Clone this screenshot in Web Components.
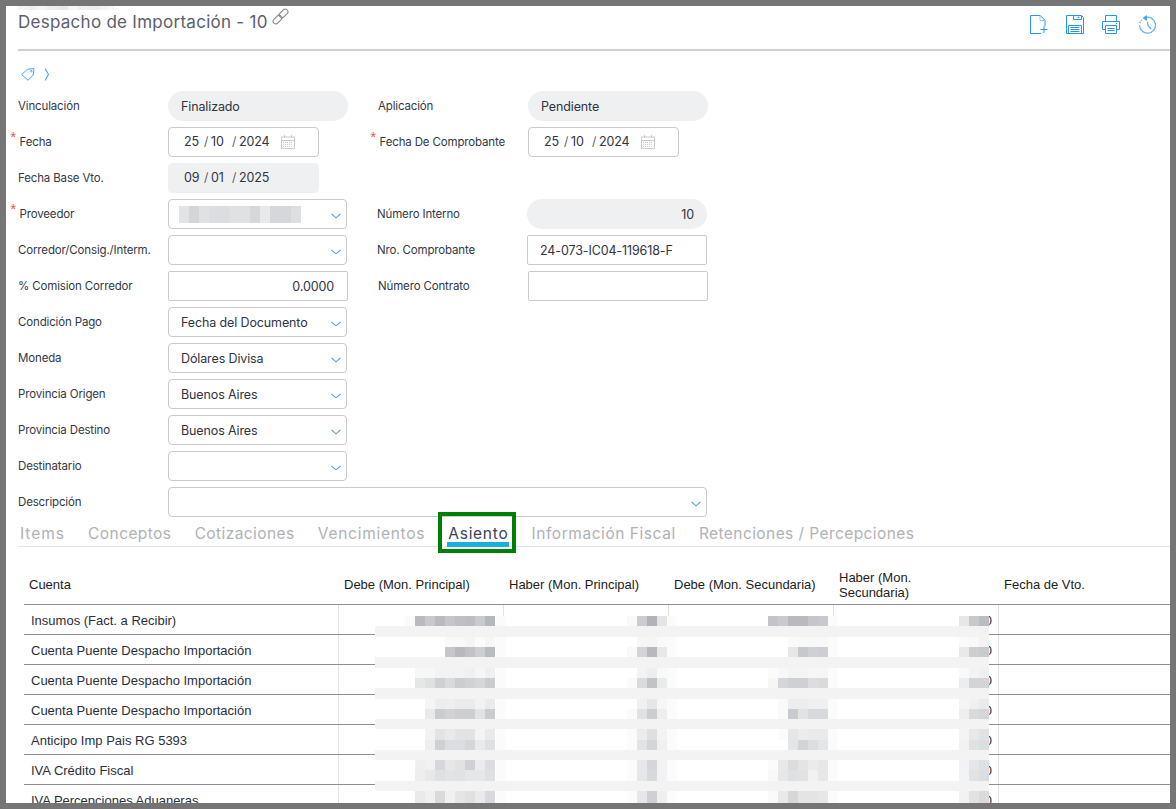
<!DOCTYPE html>
<html lang="es"><head><meta charset="utf-8"><title>Despacho de Importación</title>
<style>
html,body{margin:0;padding:0}
body{background:#757575;font-family:Inter,"Liberation Sans",sans-serif;overflow:hidden}
</style></head>
<body>
<app-page>
  <blur-strip cells="10:f4f4f4,10:f0f0f0,10:f6f6f6,11:eeeeee,10:eaeaea,10:f6f6f6,11:f0f0f0,10:eeeeee,10:f4f4f4,5:f8f8f8"></blur-strip>
  <page-header></page-header>
  <tag-row></tag-row>
  <form-row><form-field label="Vinculación" kind="pill" value="Finalizado"></form-field><form-field label="Aplicación" kind="pill" value="Pendiente"></form-field></form-row>
  <form-row><form-field label="Fecha" req kind="date" value="25/10/2024"></form-field><form-field label="Fecha De Comprobante" req kind="date" value="25/10/2024"></form-field></form-row>
  <form-row><form-field label="Fecha Base Vto." kind="dateoff" value="09/01/2025"></form-field></form-row>
  <form-row><form-field label="Proveedor" req kind="select" blur></form-field><form-field shift label="Número Interno" kind="pillnum" value="10"></form-field></form-row>
  <form-row><form-field label="Corredor/Consig./Interm." kind="select"></form-field><form-field shift label="Nro. Comprobante" kind="input" value="24-073-IC04-119618-F"></form-field></form-row>
  <form-row><form-field label="% Comision Corredor" kind="num" value="0.0000"></form-field><form-field label="Número Contrato" kind="input"></form-field></form-row>
  <form-row><form-field label="Condición Pago" kind="select" value="Fecha del Documento"></form-field></form-row>
  <form-row><form-field label="Moneda" kind="select" value="Dólares Divisa"></form-field></form-row>
  <form-row><form-field label="Provincia Origen" kind="select" value="Buenos Aires"></form-field></form-row>
  <form-row><form-field label="Provincia Destino" kind="select" value="Buenos Aires"></form-field></form-row>
  <form-row><form-field label="Destinatario" kind="select"></form-field></form-row>
  <form-row><form-field label="Descripción" kind="select" wide></form-field></form-row>
  <tab-bar></tab-bar>
  <data-table></data-table>
  <pixel-mask></pixel-mask>
</app-page>
<script>
const CHEV='<svg width="10" height="6" viewBox="0 0 10 6" fill="none"><path d="M.5 .8 5 4.8 9.5 .8" stroke="#5b9bdc" stroke-width="1.1"/></svg>';
const CAL='<svg width="14" height="14" viewBox="0 0 14 14" fill="none" stroke="#c9cbce"><rect x=".5" y="2" width="13" height="11.5"/><path d="M3.5 0v3M10.5 0v3"/><path d="M1 5.5h12"/><path d="M2 7.5h10M2 9.5h10M2 11.5h10" stroke-dasharray="1 1"/></svg>';
function def(name,render){customElements.define(name,class extends HTMLElement{connectedCallback(){if(this.shadowRoot)return;this.attachShadow({mode:'open'}).innerHTML=render(this)}})}

def('app-page',()=>`<style>:host{display:block;margin:6px 6px 0;width:1164px;height:797px;background:#fff;position:relative;overflow:hidden;box-sizing:border-box;padding-left:12px}</style><slot></slot>`);

def('blur-strip',el=>{
 const cells=el.getAttribute('cells').split(',').map(c=>{const [w,col]=c.split(':');return `<i style="width:${w}px;background:#${col}"></i>`}).join('');
 return `<style>:host{display:flex;height:4px;margin-left:-1px}i{display:block;height:100%}</style>${cells}`});

def('page-header',()=>`<style>
:host{display:flex;justify-content:space-between;height:39px;border-bottom:2px solid #d0d0d4}
.t{display:flex;align-items:flex-start;height:24px;font:400 17px/24px Inter,sans-serif;letter-spacing:.27px;color:#5b606b}
.t svg{margin:-2px 0 0 4px}
.a{display:flex;gap:18px;padding:5px 12px 0 0;align-items:flex-start}
svg{display:block}
</style>
<div class="t"><span>Despacho de Importación - 10</span>
<svg width="17" height="17" viewBox="0 0 17 17" fill="none" stroke="#7d828b" stroke-width="1"><rect x="-5" y="-2.7" width="10" height="5.4" rx="2.7" transform="translate(5.4 11.6) rotate(-45)"/><rect x="-5" y="-2.7" width="10" height="5.4" rx="2.7" transform="translate(11.6 5.4) rotate(-45)"/></svg></div>
<div class="a">
<svg width="18" height="19" viewBox="0 0 18 19" fill="none" stroke="#2196f3"><path d="M11 18.5H.5V.5H10L15 5.2V11"/><path d="M10 .5V5.5H15" stroke="#90caf9"/><path d="M10.5 14.5h7M14 11v7"/></svg>
<svg width="18" height="19" viewBox="0 0 18 19" fill="none" stroke="#2196f3"><path d="M.5.5H15.5L17.5 2.5V18.5H.5Z"/><path d="M7.5.5V4.5H15.5V.5"/><path d="M12.5 1.5v1.5" stroke-width="1.5"/><path d="M2.5 18.5V10.5H15.5V18.5"/><path d="M4.5 12.5h9M4.5 14.5h9M4.5 16.5h9"/></svg>
<svg width="18" height="19" viewBox="0 0 18 19" fill="none" stroke="#2196f3"><path d="M3.5 6V.5H14.5V6"/><path d="M3.5 14.5H.5V6.5H17.5V14.5H14.5"/><path d="M3.5 10.5H14.5V18.5H3.5Z"/><path d="M5.5 13.5h7M5.5 15.5h7"/><path d="M14.5 8v1"/></svg>
<svg width="20" height="19" viewBox="0 0 20 19" fill="none" stroke="#64b5f6" stroke-width="1.3"><path d="M7.5 2.4A8 8 0 1 1 1.5 10.5"/><path d="M1.8 8A8 8 0 0 1 4 4.8" stroke-dasharray="1.5 1.2"/><path d="M9 0v6L4.5 3Z" fill="#42a5f5" stroke="none"/><path d="M9.5 6.5 10 10.5 13 14"/></svg>
</div>`);

def('tag-row',()=>`<style>:host{display:flex;align-items:center;gap:9px;height:34px;padding:12px 0 0 3px;box-sizing:border-box}svg{display:block}</style>
<svg width="14" height="14" viewBox="0 0 14 14" fill="none" stroke="#42a5f5"><path d="M.7 7.6 6.5 2.2 13 1.6 12.2 8 7 13.3Z"/><circle cx="10.3" cy="4.2" r=".7"/></svg>
<svg width="6" height="13" viewBox="0 0 6 13" fill="none" stroke="#42a5f5" stroke-width="1.1"><path d="M1 .5 4.5 6.5 1 12.5"/></svg>`);

def('form-row',()=>`<style>:host{display:flex;height:30px;margin-top:6px;align-items:flex-start}</style><slot></slot>`);

def('form-field',el=>{
 const k=el.getAttribute('kind'),v=el.getAttribute('value')||'',req=el.hasAttribute('req'),wide=el.hasAttribute('wide'),shift=el.hasAttribute('shift');
 let inner='';
 if(k==='date'||k==='dateoff'){const p=v.split('/');inner=`<span class="d1">${p[0]}</span><span class="s">/</span><span class="d2">${p[1]}</span><span class="s">/</span><span class="d3">${p[2]}</span>`+(k==='date'?`<span class="cal">${CAL}</span>`:'')}
 else if(k==='select'){inner=(el.hasAttribute('blur')?`<blur-bar></blur-bar>`:`<span class="v">${v}</span>`)+`<span class="ch">${CHEV}</span>`}
 else inner=`<span class="v">${v}</span>`;
 return `<style>
:host{display:flex;width:${wide?'auto':'360px'};height:30px;${shift?'margin-left:-1px;':''}}
.l{position:relative;width:150px;flex:none;box-sizing:border-box;font:400 11.5px/30px Inter,sans-serif;letter-spacing:-.15px;color:#333844;padding-left:${req?'1.5px':'0'};white-space:nowrap}
.l b{position:absolute;left:-7.5px;top:-4px;color:#ef4a52;font:400 14px/28px "Liberation Sans",sans-serif}
.c{box-sizing:border-box;height:30px;display:flex;align-items:center;font:400 12.5px/20px Inter,sans-serif;letter-spacing:-.12px;color:#30343f;flex:none}
.v{padding-top:2px}
.pill,.pillnum{width:180px;border-radius:15px;background:#eff0f2;padding:0 13px}
.pillnum{justify-content:flex-end}
.date,.dateoff{width:151px;border-radius:4px;border:1px solid #c9cacd;padding-left:15px}
.dateoff{background:#eff0f2;border-color:#eff0f2}
.d1{width:20px}.d2{width:21px}.s{width:7px;font-weight:300}
.cal{margin-left:11px;display:flex;align-items:center}
.select{width:${wide?'539px':'179px'};border:1px solid #c9cacd;border-radius:4px;padding:0 5px 0 12px;justify-content:space-between}
.input{width:180px;border:1px solid #c9cacd;border-radius:2px;padding:0 12px}
.num{width:180px;border:1px solid #c9cacd;border-radius:2px;padding:0 13px;justify-content:flex-end}
.ch{display:flex;margin-left:auto;padding-top:3px}
blur-bar{margin-left:-2px}
</style><div class="l">${req?'<b>*</b>':''}${el.getAttribute('label')}</div><div class="c ${k}">${inner}</div>`});

def('blur-bar',()=>{
 const c=['e2e3e4','d4d5d7','e0e1e3','dcdde0','dcdde0','e0e1e3','e0e1e3','d6d7da','e8e9ea','d6d7da','d6d7da','dedfe1'];
 return `<style>:host{display:flex;height:17px}i{display:block;width:10.17px;height:100%}</style>`+c.map(x=>`<i style="background:#${x}"></i>`).join('')});

def('tab-bar',()=>{
 const tabs=[['Items',.96],['Conceptos',.42],['Cotizaciones',.42],['Vencimientos',.72],['Asiento',.72],['Información Fiscal',.55],['Retenciones / Percepciones',.42]];
 return `<style>
:host{display:flex;height:30px;box-sizing:border-box;border-bottom:1px solid #e3e3e5;padding:5px 0 0 2px;gap:23.2px}
.t{position:relative;font:400 15.5px/24px Inter,sans-serif;color:#b0b2b6;white-space:nowrap;height:24px}
.on{color:#3a4256}
.on::before{content:"";position:absolute;left:-1px;right:-1px;top:20px;height:5px;background:#1bb0d6}
.on::after{content:"";position:absolute;left:-10px;right:-8px;top:-10px;height:41px;box-sizing:border-box;border:4px solid #008000}
</style>`+tabs.map(([t,s])=>`<div class="t${t==='Asiento'?' on':''}" style="letter-spacing:${s}px">${t}</div>`).join('')});

def('data-table',()=>{
 const rows=['Insumos (Fact. a Recibir)','Cuenta Puente Despacho Importación','Cuenta Puente Despacho Importación','Cuenta Puente Despacho Importación','Anticipo Imp Pais RG 5393','IVA Crédito Fiscal','IVA Percepciones Aduaneras'];
 const heads=['Cuenta','Debe (Mon. Principal)','Haber (Mon. Principal)','Debe (Mon. Secundaria)','Haber (Mon.<br>Secundaria)','Fecha de Vto.'];
 return `<style>
:host{display:block;margin:18px 0 0 6px;font:400 13px/15px "Liberation Sans",Arial,sans-serif;color:#2b2f3a}
.r{display:grid;grid-template-columns:314px 165px 165px 165px 165px 172px;box-sizing:border-box;height:30px;border-bottom:1px solid #8e8e8e}
.h{height:40px;color:#1c1c1c}
.h div{display:flex;align-items:center;padding:0 8px 0 6px;box-sizing:border-box}
.h div:first-child{padding-left:5px}
.b div{display:flex;align-items:center;box-sizing:border-box;border-left:1px solid #e2e2e2;padding-top:1px}
.b div:first-child{padding-left:7px;border-left:0}
.b .n{justify-content:flex-end;padding-right:6px}
</style><div class="r h">${heads.map(h=>`<div><span>${h}</span></div>`).join('')}</div>
${rows.map(r=>`<div class="r b"><div>${r}</div><div></div><div></div><div></div><div class="n">0</div><div></div></div>`).join('')}`});

def('pixel-mask',()=>{
 const Y=[[0,10],[21,10],[31,10],[52,10],[62,10],[83,10],[93,10],[113,11],[124,10],[144,10],[154,11],[175,12]];
 const bands=[10,41,72,103,134,165];
 const G=[
 {x:405,r:['f9fafa b8babf c8c9cd b8babe c5c6ca bfc0c5 bcbec2 c9cacd b5b8bb',
   '- - - - f9f9f9 f9f9f9 f5f5f5 fbfbfb f6f6f6','- - - - c6c7cb b7b9be c1c2c6 cdced1 b9bcbf',
   '- f6f7f7 f6f7f7 f2f3f4 f2f3f4 f2f3f4 eff0f1 f6f6f6 eff0f1','- e5e6e7 dfe0e2 cfd0d4 d9dadc cccdd1 d1d2d5 d6d7d9 cbccd0',
   '- - f5f5f5 ecedee eeeeee ebebed ebebed f1f2f3 e9eaeb','- - e9e9ea cbccd0 d1d2d4 cdced2 cdced2 e2e3e4 cbccd0',
   '- - f2f2f2 e2e3e5 e8e9ea e2e3e5 e2e3e5 f4f4f4 e9eaeb','- - eeeeef d0d1d3 dcdde0 dcdde0 d5d6d8 e9eaeb dfe0e2',
   '- efefef f1f1f0 d6d7da e6e7e8 e1e2e4 d0d1d4 ebecee dcdde0','- eeeeef e7e8e9 dfe0e2 e2e3e5 e1e2e3 e5e6e7 e6e7e8 dfe0e2',
   '- e9eaec eff0f2 d9dadc eff0f2 e4e5e6 dfe0e2 e9eaeb d8d9dc']},
 {x:627,r:['f9f9f9 cbccd0 b2b3b8 e3e4e6',
   '- f6f6f6 f5f5f5 fafafa','f9f9f9 d3d4d6 b7b9bd e7e8e9',
   '- f3f3f3 edeeef f8f9f9','fafafa dadbdc c2c3c7 e9eaeb',
   '- f0f0f1 e5e6e8 f6f6f6','fafafa e0e1e3 cccdd1 eeeeef',
   'fbfbfb ebecec dedfe1 f2f3f5','fbfbfb e2e3e5 d4d5d7 f0f0f0',
   'fbfbfb e6e7e9 d5d6da f1f2f4','fbfbfb e6e7e9 d8d9dc f1f2f4',
   'fbfbfb e6e7e9 cfd0d4 efefef']},
 {x:768,r:['c3c4c9 c9cacd b8babe b8babe c5c6ca c8c9cc',
   '- - fafafa f8f9f9 f8f8f8 f8f8f8','- - e6e7e8 c7c8cc cfd0d3 cdced1',
   'fbfbfb f6f7f7 f3f4f4 f4f4f4 f5f6f5 f5f6f5','f6f6f6 d5d6da cfd0d4 cfd0d4 dcdde0 d9dadc',
   '- fafafa ecedee ecedee f0f0f1 eff0f1','- fafafa c9cacf e2e3e4 d8d9dc d8d9dc',
   '- fbfbfb e5e6e7 ebecec e9eaeb e9eaeb','- - e4e5e6 d3d4d6 dcdde0 e4e5e6',
   'fbfbfb e7e8e9 dbdcde e3e4e6 eaebec e6e7e9','f8f8f8 e6e7e9 dfe0e2 e1e2e4 f1f1f1 e6e7e9',
   'fafafa e8e9ea d6d7d9 e3e4e5 e3e4e5 e5e6e7']},
 {x:959,r:['e6e7e9 c7c8cc bbbcc1',
   'fafafa f9f9f9 f3f3f3','e8e9eb cdced1 c9cacd',
   'f8f9f9 f2f3f4 eff0f1','ecedee d3d4d5 d3d4d5',
   'f5f5f5 f0f0f2 e9eaeb','eeeeef d9dadc d5d6d8',
   'f4f4f4 e7e8ea e1e2e4','f1f2f1 e0e1e3 dcdde0',
   'f1f2f5 e5e6e8 dfe0e4','f2f3f5 e1e2e4 dcdde0',
   'f1f2f1 e1e2e4 d9dadc']}];
 let s=`<rect x="0" y="0" width="614" height="187" fill="#fff"/>`;
 [[496,10],[667,10],[828,10]].forEach(([x,w])=>{s+=`<rect x="${x-375}" y="0" width="${w}" height="187" fill="#fbfbfb"/>`});
 G.forEach(g=>{g.r.forEach((row,i)=>{const [y,h]=Y[i];row.split(' ').forEach((c,j)=>{if(c!=='-')s+=`<rect x="${g.x-375+j*10}" y="${y}" width="10" height="${h}" fill="#${c}"/>`})})});
 bands.forEach((y,i)=>{s+=`<rect x="0" y="${y}" width="614" height="${i<3?11:10}" fill="#f3f3f3"/>`});
 return `<style>:host{position:absolute;left:369px;top:610px;width:614px;height:187px;display:block}svg{display:block}</style><svg width="614" height="187" shape-rendering="crispEdges">${s}</svg>`});
</script>
</body></html>
